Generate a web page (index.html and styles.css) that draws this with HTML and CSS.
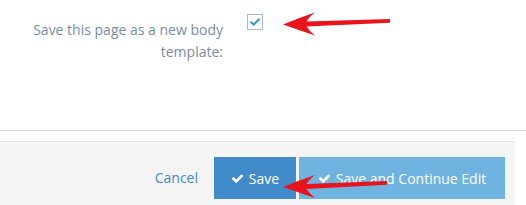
FILE: index.html
```html
<!DOCTYPE html>
<html>
<head>
<meta charset="utf-8">
<link rel="stylesheet" href="styles.css">
</head>
<body>
<div class="page">
  <div class="form-area">
    <div class="form-row">
      <label class="field-label" for="tpl">Save this page as a new body template:</label>
      <span class="checkbox">
        <svg viewBox="0 0 16 16" width="16" height="16"><path d="M4.2 8.3 L6.8 10.6 L11.8 5.4" fill="none" stroke="#3a9ad9" stroke-width="2.2" stroke-linecap="round" stroke-linejoin="round"/></svg>
      </span>
    </div>
  </div>
  <div class="form-actions">
    <a class="cancel" href="#">Cancel</a>
    <button class="btn btn-primary"><svg class="ico" viewBox="0 0 1792 1792"><path d="M1671 566q0 40-28 68l-724 724-136 136q-28 28-68 28t-68-28l-136-136-362-362q-28-28-28-68t28-68l136-136q28-28 68-28t68 28l294 295 656-657q28-28 68-28t68 28l136 136q28 28 28 68z"/></svg>Save</button>
    <button class="btn btn-info"><svg class="ico" viewBox="0 0 1792 1792"><path d="M1671 566q0 40-28 68l-724 724-136 136q-28 28-68 28t-68-28l-136-136-362-362q-28-28-28-68t28-68l136-136q28-28 68-28t68 28l294 295 656-657q28-28 68-28t68 28l136 136q28 28 28 68z"/></svg>Save and Continue Edit</button>
  </div>
  <svg class="arrows" viewBox="0 0 526 205" width="526" height="205">
    <path d="M283,24.5 Q300,17.5 315,12.5 Q308.5,17.5 306.5,21.5 L390,19 L390,22.8 L306.5,26.6 Q309,31 315,35.5 Q300,30.5 283,24.5 Z" fill="#e8131b"/>
    <path d="M283,187 Q300,180 315,175 Q308.5,180 306.5,184 L387,181 L387,184.8 L306.5,189.1 Q309,193.5 315,198 Q300,193 283,187 Z" fill="#e8131b"/>
  </svg>
</div>
</body>
</html>
```
FILE: styles.css
```css
html, body {
  margin: 0;
  padding: 0;
  background: #ffffff;
}
body {
  font-family: "Open Sans", "Liberation Sans", sans-serif;
  font-size: 14px;
  width: 526px;
  height: 205px;
  overflow: hidden;
}
.page {
  position: relative;
  width: 526px;
  height: 205px;
}
.form-area {
  height: 131px;
  border-bottom: 1px solid #d3d9e4;
  box-sizing: border-box;
}
.form-row {
  display: flex;
  align-items: flex-start;
}
.field-label {
  width: 203px;
  padding-left: 20px;
  padding-top: 19px;
  text-align: right;
  line-height: 21.5px;
  color: #7b8da3;
}
.checkbox {
  display: block;
  width: 14px;
  height: 14px;
  margin-left: 24px;
  margin-top: 14px;
  border: 1px solid #a9b8c8;
  background: #fff;
  position: relative;
}
.checkbox svg {
  display: block;
  margin: -1px;
}
.form-actions {
  margin-top: 10px;
  width: 515px;
  height: 70px;
  box-sizing: border-box;
  background: #f4f4f4;
  border-top: 1px solid #e5e5e5;
  display: flex;
  justify-content: flex-end;
  align-items: flex-start;
  padding: 15px 10px 0 0;
}
.cancel {
  color: #428bca;
  text-decoration: none;
  line-height: 42px;
  margin-right: 16px;
}
.btn {
  height: 42px;
  border: 0;
  margin: 0;
  padding: 0;
  color: #fff;
  font-family: "Open Sans", "Liberation Sans", sans-serif;
  font-size: 14px;
  display: flex;
  align-items: center;
  justify-content: center;
}
.btn-primary {
  width: 82px;
  background: #428bca;
}
.btn-info {
  width: 206px;
  margin-left: 3px;
  background: #6fb3e0;
}
.ico {
  width: 13px;
  height: 13px;
  fill: #fff;
  margin-right: 5px;
}
.arrows {
  position: absolute;
  left: 0;
  top: 0;
  pointer-events: none;
}
```
